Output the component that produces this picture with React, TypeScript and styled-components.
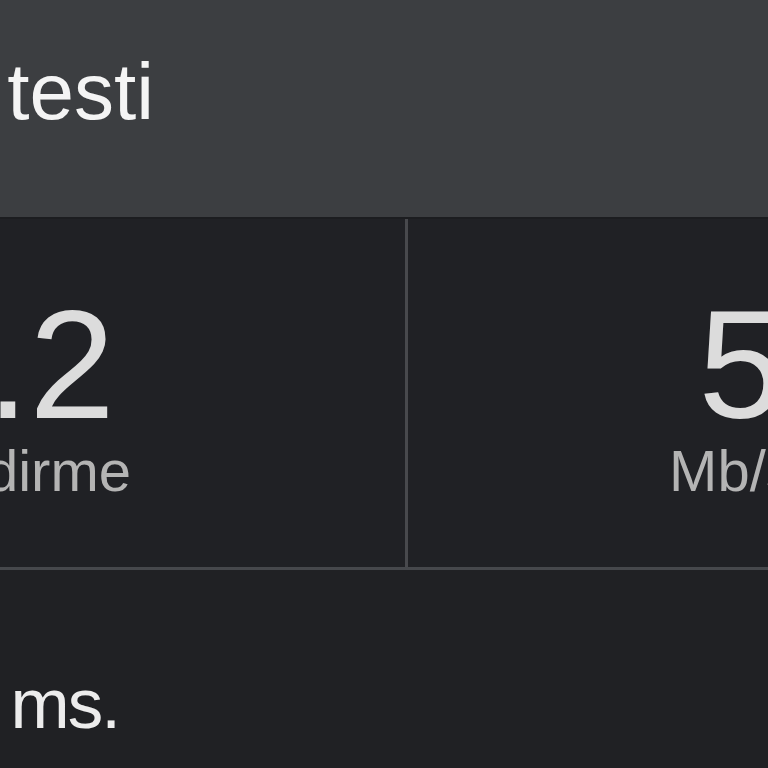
import styled, { createGlobalStyle } from 'styled-components';

const GlobalStyle = createGlobalStyle`
    html, body {
        margin: 0;
        padding: 0;
        background: #202124;
        overflow: hidden;
    }
    body {
        font-family: 'Liberation Sans', Arial, sans-serif;
        -webkit-font-smoothing: antialiased;
    }
`;

// the page is wider than the window: only its middle part shows
export const Page = styled.div`
    width: 2400px;
    margin-left: -475px;
    height: 768px;
    background: #202124;
`;

export const Header = styled.header`
    box-sizing: border-box;
    height: 217px;
    padding: 52px 0 0 340px;
    background-color: #3c3e41;
`;

export const Title = styled.h1`
    margin: 0;
    font-size: 80px;
    line-height: 1;
    font-weight: 400;
    color: #f4f4f4;
    white-space: nowrap;
`;

export const Stats = styled.div`
    display: grid;
    grid-template-columns: 880px 880px;
    column-gap: 3px;
    width: 1763px;
    background-color: #48494d;
    border-top: 2px solid #1c1d20;
    border-bottom: 3px solid #46484c;
`;

export const Cell = styled.div`
    box-sizing: border-box;
    height: 348px;
    padding-top: 69px;
    display: flex;
    flex-direction: column;
    align-items: center;
    background-color: #202125;
`;

export const Value = styled.div`
    font-size: 154px;
    line-height: 1;
    color: #dcdcdc;
    white-space: nowrap;
`;

export const Label = styled.div`
    font-size: 58px;
    line-height: 1;
    color: #b4b4b4;
    white-space: nowrap;
`;

export const Footer = styled.div`
    padding: 98px 0 0 241px;
`;

export const Ping = styled.div`
    font-size: 71px;
    line-height: 1;
    letter-spacing: -2px;
    color: #ececec;
    white-space: nowrap;
`;

const stats = [
    { value: '94.2', label: 'Mb/s indirme' },
    { value: '52.8', label: 'Mb/s yükleme' },
];

export default function App() {
    return (
        <>
            <GlobalStyle />
            <Page>
                <Header>
                    <Title>Hız testi</Title>
                </Header>
                <Stats>
                    {stats.map((s) => (
                        <Cell key={s.label}>
                            <Value>{s.value}</Value>
                            <Label>{s.label}</Label>
                        </Cell>
                    ))}
                </Stats>
                <Footer>
                    <Ping>Ping 14 ms.</Ping>
                </Footer>
            </Page>
        </>
    );
}
